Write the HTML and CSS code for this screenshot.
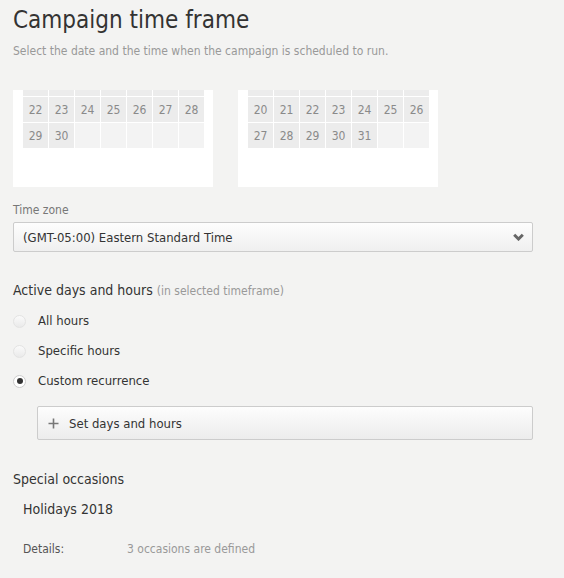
FILE: index.html
```html
<!DOCTYPE html>
<html>
<head>
<meta charset="utf-8">
<link rel="stylesheet" href="styles.css">
</head>
<body>
<div class="page">
  <h1 class="title">Campaign time frame</h1>
  <p class="subtitle">Select the date and the time when the campaign is scheduled to run.</p>

  <div class="calendars">
    <div class="cal">
      <div class="grid">
        <div class="cell partial"></div><div class="cell partial"></div><div class="cell partial"></div><div class="cell partial"></div><div class="cell partial"></div><div class="cell partial"></div><div class="cell partial"></div>
        <div class="cell">22</div><div class="cell">23</div><div class="cell">24</div><div class="cell">25</div><div class="cell">26</div><div class="cell">27</div><div class="cell">28</div>
        <div class="cell">29</div><div class="cell">30</div><div class="cell empty"></div><div class="cell empty"></div><div class="cell empty"></div><div class="cell empty"></div><div class="cell empty"></div>
      </div>
    </div>
    <div class="cal">
      <div class="grid">
        <div class="cell partial"></div><div class="cell partial"></div><div class="cell partial"></div><div class="cell partial"></div><div class="cell partial"></div><div class="cell partial"></div><div class="cell partial"></div>
        <div class="cell">20</div><div class="cell">21</div><div class="cell">22</div><div class="cell">23</div><div class="cell">24</div><div class="cell">25</div><div class="cell">26</div>
        <div class="cell">27</div><div class="cell">28</div><div class="cell">29</div><div class="cell">30</div><div class="cell">31</div><div class="cell empty"></div><div class="cell empty"></div>
      </div>
    </div>
  </div>

  <div class="field">
    <div class="label">Time zone</div>
    <div class="select">
      <span>(GMT-05:00) Eastern Standard Time</span>
      <svg class="chev" width="11" height="8" viewBox="0 0 11 8"><path d="M1.2 1.8 L5.5 6 L9.8 1.8" fill="none" stroke="#666" stroke-width="3" stroke-linejoin="miter"/></svg>
    </div>
  </div>

  <h2 class="section">Active days and hours <span class="hint">(in selected timeframe)</span></h2>
  <div class="radios">
    <label class="radio"><span class="dot"></span>All hours</label>
    <label class="radio"><span class="dot"></span>Specific hours</label>
    <label class="radio"><span class="dot checked"></span>Custom recurrence</label>
  </div>

  <div class="button">
    <svg class="plus" width="11" height="11" viewBox="0 0 11 11"><path d="M5.5 0.5 V10.5 M0.5 5.5 H10.5" stroke="#777" stroke-width="1.6"/></svg>
    <span>Set days and hours</span>
  </div>

  <h2 class="section occ">Special occasions</h2>
  <div class="occasion">
    <div class="occ-name">Holidays 2018</div>
    <div class="details"><span class="dlabel">Details:</span><span class="dvalue">3 occasions are defined</span></div>
  </div>
</div>
</body>
</html>
```

FILE: styles.css
```css
html, body {
  margin: 0;
  padding: 0;
  background: #f3f3f2;
}
.page {
  padding: 0 31px 0 13px;
  font-family: "DejaVu Sans Condensed", "DejaVu Sans", sans-serif;
  color: #333;
}
.title {
  margin: 0;
  padding-top: 5px;
  font-size: 24px;
  font-weight: normal;
  line-height: 30px;
  color: #333;
}
.subtitle {
  margin: 8px 0 0;
  font-size: 12px;
  line-height: 16px;
  color: #999;
}
.calendars {
  display: flex;
  gap: 25px;
  margin-top: 31px;
}
.cal {
  width: 200px;
  background: #fff;
  padding: 0 10px 39px;
  box-sizing: border-box;
}
.grid {
  display: grid;
  grid-template-columns: repeat(7, 25px);
  grid-auto-rows: 25px;
  grid-template-rows: 6px;
  gap: 1px;
}
.cell {
  background: #ececec;
  color: #8a8a8a;
  font-size: 12px;
  display: flex;
  align-items: center;
  justify-content: center;
}
.cell.empty {
  background: #f3f3f3;
}
.field {
  margin-top: 15px;
}
.label {
  font-size: 12px;
  line-height: 16px;
  color: #777;
}
.select {
  margin-top: 4px;
  height: 30px;
  box-sizing: border-box;
  border: 1px solid #ccc;
  border-radius: 2px;
  background: linear-gradient(#fdfdfd, #efefef);
  display: flex;
  align-items: center;
  justify-content: space-between;
  padding: 0 8px 0 9px;
  font-size: 13px;
  color: #333;
}
.section {
  margin: 29px 0 0;
  font-size: 14px;
  font-weight: normal;
  line-height: 18px;
  color: #333;
}
.hint {
  font-size: 12px;
  color: #999;
}
.radios {
  display: flex;
  flex-direction: column;
  gap: 12px;
  margin-top: 12px;
}
.radio {
  display: flex;
  align-items: center;
  gap: 12px;
  font-size: 13px;
  line-height: 18px;
  color: #333;
}
.dot {
  width: 13px;
  height: 13px;
  border-radius: 50%;
  box-sizing: border-box;
  border: 1px solid #e3e3e3;
  background: linear-gradient(#fafafa, #eaeaea);
  position: relative;
}
.dot.checked {
  border-color: #ccc;
  background: #fff;
}
.dot.checked::after {
  content: "";
  position: absolute;
  left: 2.5px;
  top: 2.5px;
  width: 6px;
  height: 6px;
  border-radius: 50%;
  background: #333;
}
.button {
  margin: 16px 0 0 24px;
  height: 34px;
  box-sizing: border-box;
  border: 1px solid #ccc;
  border-radius: 2px;
  background: linear-gradient(#fdfdfd, #ececec);
  display: flex;
  align-items: center;
  gap: 10px;
  padding-left: 10px;
  font-size: 13px;
  color: #333;
}
.section.occ {
  margin-top: 30px;
}
.occasion {
  padding-left: 10px;
}
.occ-name {
  margin-top: 12px;
  font-size: 14px;
  line-height: 18px;
}
.details {
  margin-top: 23px;
  display: flex;
  font-size: 12px;
  line-height: 16px;
}
.dlabel {
  width: 104px;
  color: #555;
}
.dvalue {
  color: #999;
}
```
